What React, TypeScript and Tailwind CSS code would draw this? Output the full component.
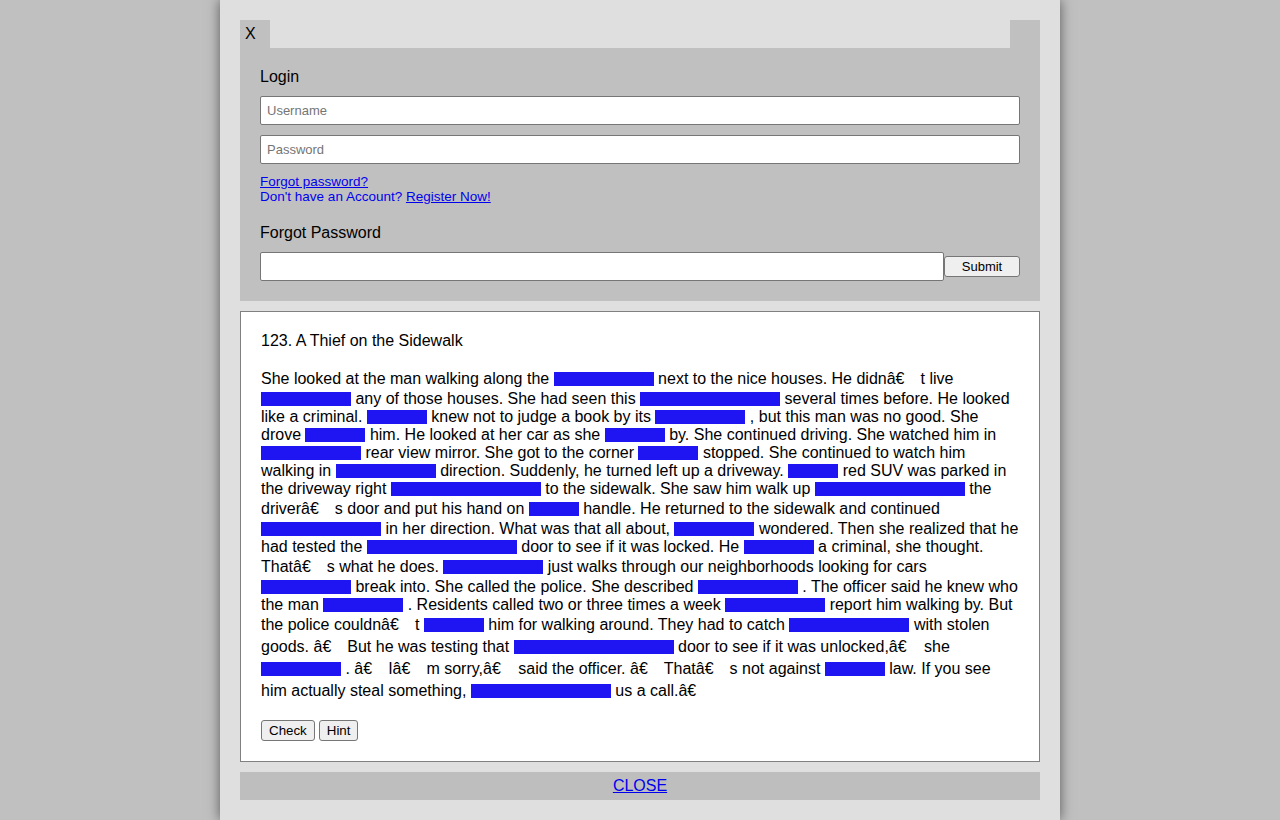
import React from "react";

const C = "\u00e2\u20ac";
const Q = C + "\u0099";
const OQ = C + "\u009c";
const CQ = C + "\u009d";

const story: (string | number)[] = [
  "She looked at the man walking along the ", 100,
  ` next to the nice houses. He didn${Q}t live `, 90,
  " any of those houses. She had seen this ", 140,
  " several times before. He looked like a criminal. ", 60,
  " knew not to judge a book by its ", 90,
  " , but this man was no good. She drove ", 60,
  " him. He looked at her car as she ", 60,
  " by. She continued driving. She watched him in ", 100,
  " rear view mirror. She got to the corner ", 60,
  " stopped. She continued to watch him walking in ", 100,
  " direction. Suddenly, he turned left up a driveway. ", 50,
  " red SUV was parked in the driveway right ", 150,
  " to the sidewalk. She saw him walk up ", 150,
  ` the driver${Q}s door and put his hand on `, 50,
  " handle. He returned to the sidewalk and continued ", 120,
  " in her direction. What was that all about, ", 80,
  " wondered. Then she realized that he had tested the ", 150,
  " door to see if it was locked. He ", 70,
  ` a criminal, she thought. That${Q}s what he does. `, 100,
  " just walks through our neighborhoods looking for cars ", 90,
  " break into. She called the police. She described ", 100,
  " . The officer said he knew who the man ", 80,
  " . Residents called two or three times a week ", 100,
  ` report him walking by. But the police couldn${Q}t `, 60,
  " him for walking around. They had to catch ", 120,
  ` with stolen goods. ${OQ}But he was testing that `, 160,
  ` door to see if it was unlocked,${CQ} she `, 80,
  ` . ${OQ}I${Q}m sorry,${CQ} said the officer. ${OQ}That${Q}s not against `, 60,
  " law. If you see him actually steal something, ", 140,
  ` us a call.${CQ}`,
];

function Blank({ w }: { w: number }) {
  return (
    <span
      className="inline-block h-[14px] bg-[#1f14f2] align-[-2px]"
      style={{ width: w }}
    />
  );
}

// the broken quote bytes show up as a wide empty glyph that also makes the line taller
function Garbled({ text }: { text: string }) {
  const bits = text.split(/([\u0099\u009c\u009d])/);
  return (
    <>
      {bits.map((b, i) =>
        i % 2 === 1 ? (
          <span key={i} className="pr-[3px] leading-[22px]">{b}</span>
        ) : (
          <React.Fragment key={i}>{b}</React.Fragment>
        )
      )}
    </>
  );
}

export default function App() {
  return (
    <div className="min-h-screen bg-[#c0c0c0] font-['Liberation_Sans',Arial,sans-serif] text-black">
      <div className="w-[840px] mx-auto min-h-screen bg-[#dfdfdf] p-5 shadow-[0_0_12px_rgba(0,0,0,0.55)]">
        {/* login block */}
        <div className="bg-[#c0c0c0]">
          <div className="flex h-[28px]">
            <div className="w-[30px] pl-[5px] pt-[5px] text-base leading-[18px]">X</div>
            <div className="flex-1 bg-[#dfdfdf]" />
            <div className="w-[30px]" />
          </div>
          <div className="px-5 pt-[20px] pb-5">
            <div className="text-base leading-[18px]">Login</div>
            <input
              placeholder="Username"
              className="mt-[10px] block w-full h-[29px] bg-white border border-[#767676] rounded-[2px] px-[6px] text-[13px] placeholder:text-[#757575] outline-none"
            />
            <input
              placeholder="Password"
              className="mt-[10px] block w-full h-[29px] bg-white border border-[#767676] rounded-[2px] px-[6px] text-[13px] placeholder:text-[#757575] outline-none"
            />
            <div className="mt-[10px] text-[13.5px] leading-[15px] text-[#0000ee]">
              <div>
                <a href="#" className="underline">Forgot password?</a>
              </div>
              <div>
                Don't have an Account? <a href="#" className="underline">Register Now!</a>
              </div>
            </div>
            <div className="mt-[20px] text-base leading-[18px]">Forgot Password</div>
            <div className="mt-[10px] flex items-center">
              <input className="w-[684px] h-[29px] bg-white border border-[#767676] rounded-[2px] px-[6px] text-[13px] outline-none" />
              <button className="w-[76px] h-[21px] bg-[#efefef] border border-[#767676] rounded-[3px] text-[13px] leading-none">
                Submit
              </button>
            </div>
          </div>
        </div>

        {/* exercise */}
        <div className="mt-[10px] bg-white border border-[#808080] p-5">
          <div className="text-base leading-[18px]">123. A Thief on the Sidewalk</div>
          <p className="mt-[18px] text-base leading-[normal]">
            {story.map((s, i) =>
              typeof s === "number" ? <Blank key={i} w={s} /> : <Garbled key={i} text={s} />
            )}
          </p>
          <div className="mt-[18px] flex gap-[4px]">
            <button className="h-[21px] px-[7px] bg-[#efefef] border border-[#767676] rounded-[3px] text-[13.33px] leading-none">
              Check
            </button>
            <button className="h-[21px] px-[7px] bg-[#efefef] border border-[#767676] rounded-[3px] text-[13.33px] leading-none">
              Hint
            </button>
          </div>
        </div>

        <div className="mt-[10px] h-[28px] bg-[#bebebe] flex items-center justify-center">
          <a href="#" className="text-base text-[#0000ee] underline">CLOSE</a>
        </div>
      </div>
    </div>
  );
}
